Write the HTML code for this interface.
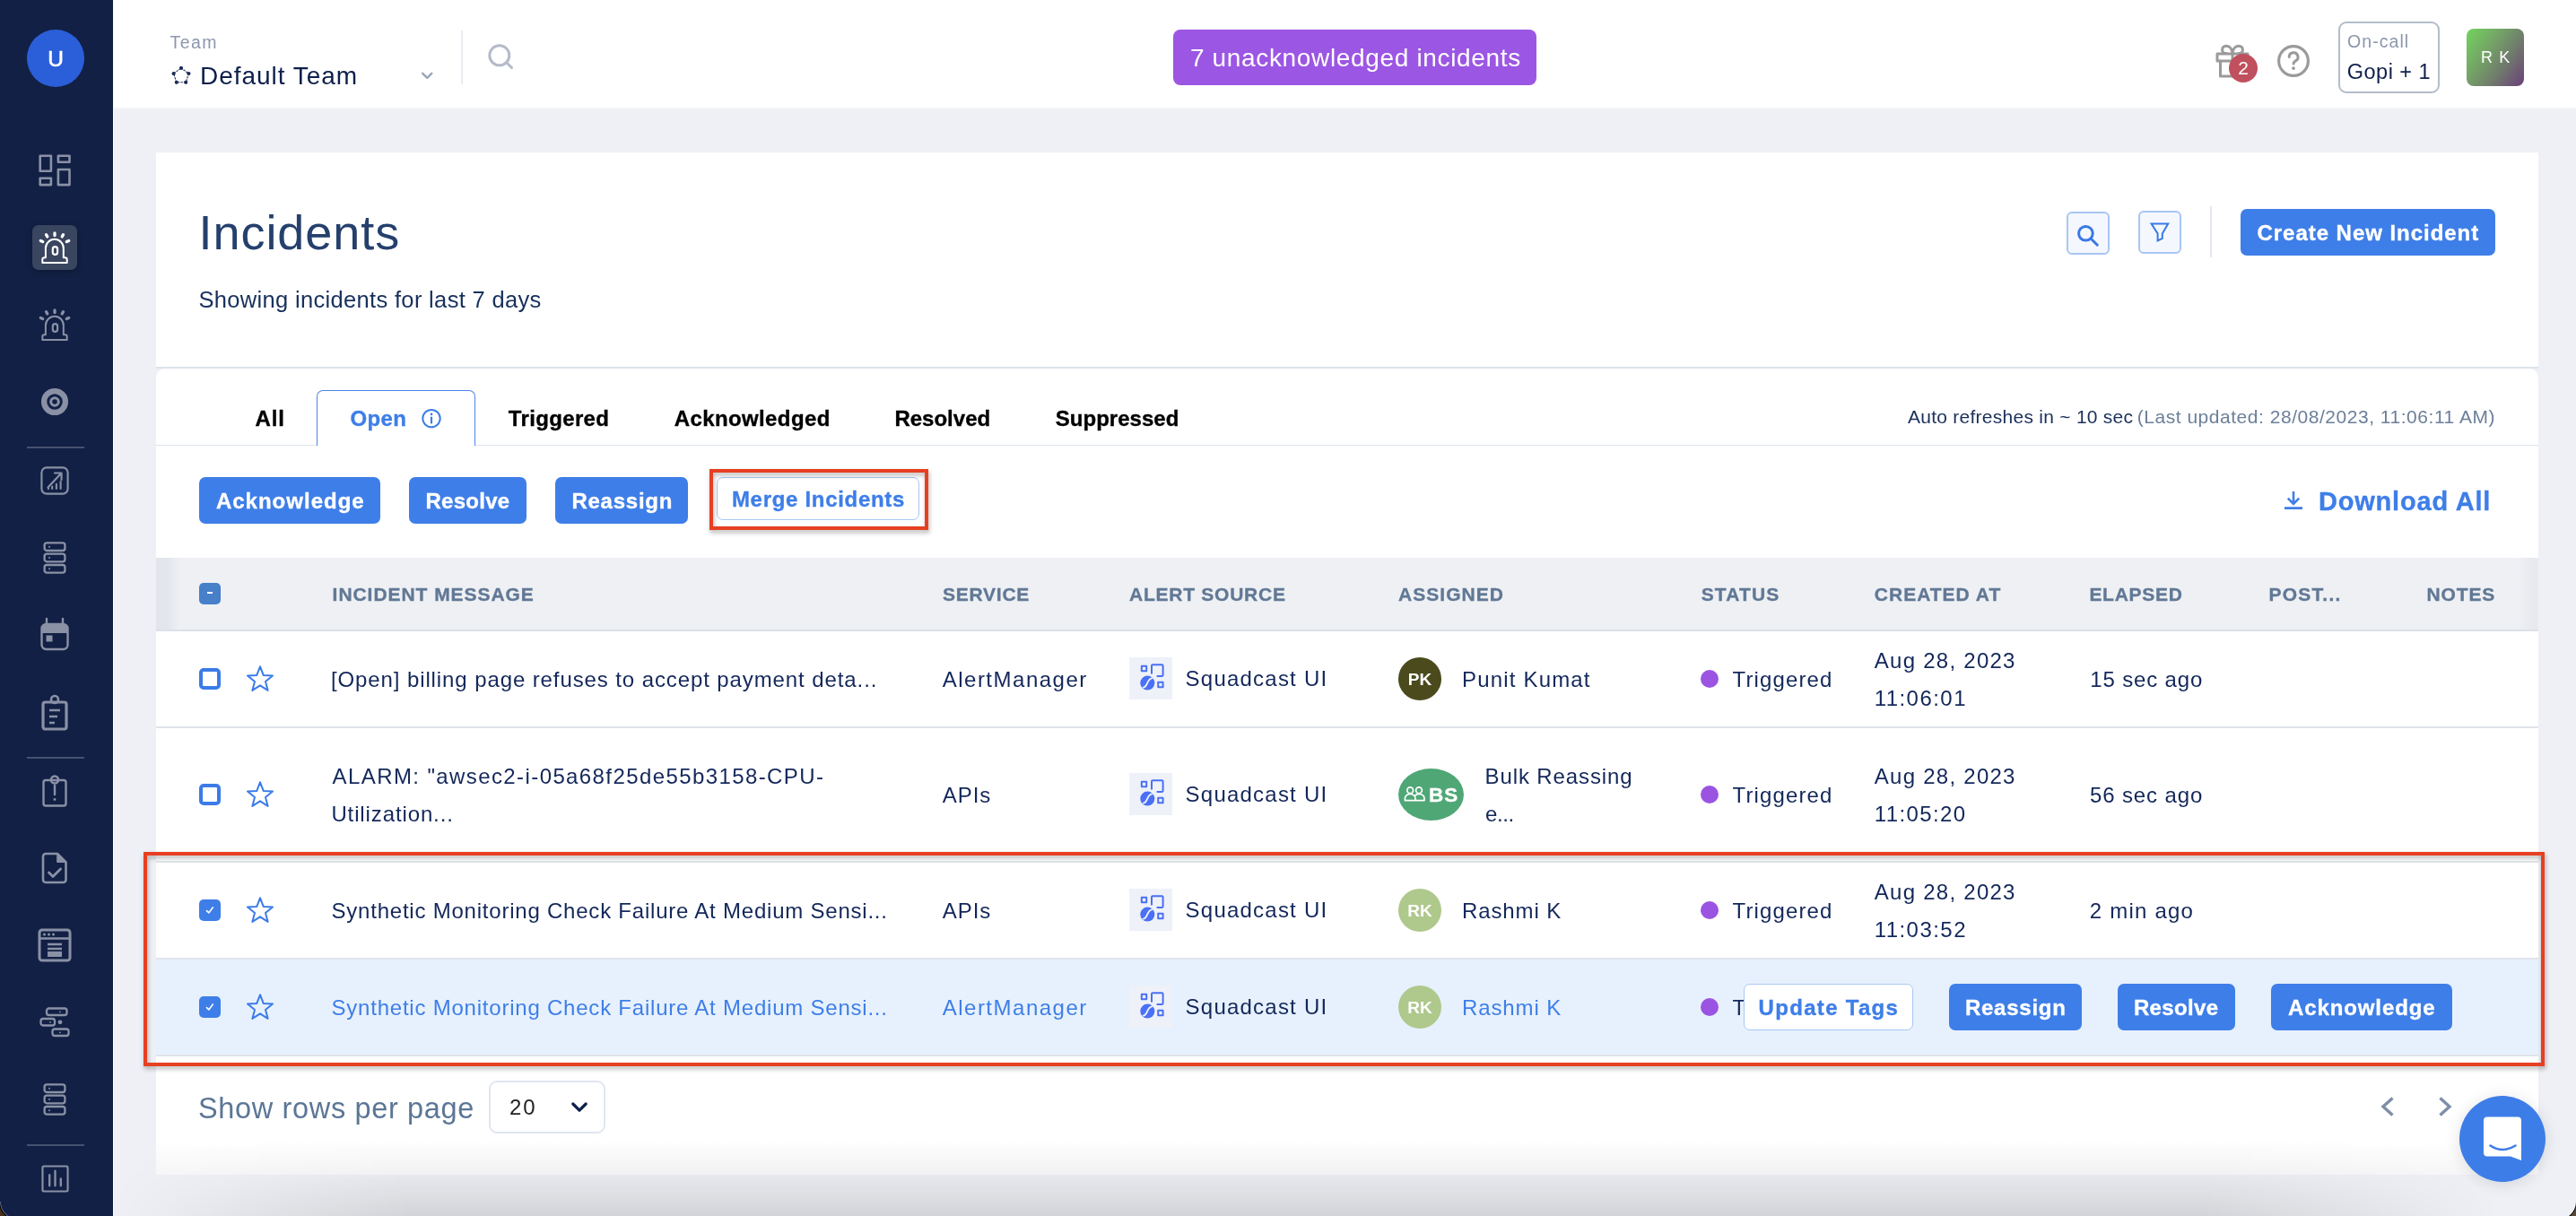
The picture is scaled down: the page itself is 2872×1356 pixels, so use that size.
<!DOCTYPE html>
<html><head><meta charset="utf-8"><title>Incidents</title>
<style>
html,body{margin:0;padding:0;}
body{width:2872px;height:1356px;overflow:hidden;position:relative;background:#eef0f5;font-family:"Liberation Sans",sans-serif;}
#w{position:absolute;left:0;top:0;width:2872px;height:1356px;will-change:transform;}
.r{position:absolute;display:block;}
.t{position:absolute;white-space:nowrap;display:block;}
</style></head><body><div id="w">
<div class="r" style="left:126px;top:0px;width:2746px;height:120px;background:#fff;"></div>
<div class="r" style="left:174px;top:170px;width:2656px;height:240px;background:#fff;"></div>
<div class="r" style="left:174px;top:409px;width:2656px;height:2px;background:#dde2ea;"></div>
<div class="r" style="left:174px;top:411px;width:2656px;height:899px;background:#fff;border-radius:10px 10px 0 0;background:linear-gradient(#fff 0,#fff 860px,#f7f7f8 899px);"></div>
<div class="r" style="left:126px;top:1272px;width:2746px;height:84px;background:linear-gradient(rgba(0,0,0,0) 0,rgba(0,0,0,0.022) 37px,rgba(0,0,0,0.034) 40px,rgba(0,0,0,0.115) 84px);-webkit-mask-image:linear-gradient(90deg,transparent 0,#000 330px,#000 2330px,transparent 2660px);mask-image:linear-gradient(90deg,transparent 0,#000 330px,#000 2330px,transparent 2660px);"></div>
<div class="r" style="left:0px;top:0px;width:126px;height:1356px;background:#122045;"></div>
<div class="r" style="left:126px;top:120px;width:1.3px;height:1236px;background:#fff;"></div>
<div class="r" style="left:127px;top:120px;width:2745px;height:2px;background:#f3f4f8;"></div>
<div class="r" style="left:0;top:1340px;width:20px;height:16px;background:radial-gradient(circle at 20px 0,rgba(0,0,0,0) 0,rgba(0,0,0,0) 18.6px,#5b6c98 19.4px,#000 20.4px,#4a3018 21.6px);"></div>
<div class="r" style="left:2852px;top:1340px;width:20px;height:16px;background:radial-gradient(circle at 0 0,rgba(0,0,0,0) 0,rgba(0,0,0,0) 18.6px,#fff 19.4px,#111 20.4px,#5a4a38 21.6px);z-index:5;"></div>
<div class="r" style="left:30px;top:33px;width:64px;height:64px;background:#2b5fd9;border-radius:50%;"></div>
<span class="t" style="left:30px;width:64px;text-align:center;top:52px;font-size:24.5px;line-height:27px;height:27px;color:#fff;-webkit-text-stroke:0.6px;">U</span>
<div class="r" style="left:36px;top:251px;width:50px;height:50px;background:#3a4560;border-radius:7px;box-shadow:0 2px 6px rgba(0,0,0,.25);"></div>
<div class="r" style="left:30px;top:498px;width:64px;height:2px;background:#46516e;"></div>
<div class="r" style="left:30px;top:844px;width:64px;height:2px;background:#46516e;"></div>
<div class="r" style="left:30px;top:1276px;width:64px;height:2px;background:#46516e;"></div>
<svg class="r" style="left:42px;top:172px;" width="38" height="38" viewBox="0 0 38 38" fill="none" stroke="#8a91a5" stroke-width="2.6" stroke-linecap="round" stroke-linejoin="round"><rect x="2.7" y="1.7" width="12.2" height="17" /><rect x="22.9" y="1.7" width="12.6" height="7.1"/><rect x="22.9" y="17" width="12.6" height="17.1"/><rect x="2.7" y="26.8" width="12.2" height="7.3"/></svg>
<svg class="r" style="left:41px;top:256px;" width="40" height="40" viewBox="0 0 40 40" fill="none" stroke="#ffffff" stroke-width="2.0" stroke-linecap="round" stroke-linejoin="round"><path d="M9.9 31.3 V20.8 a9.95 9.95 0 0 1 19.9 0 V31.3 h1.6 a2.3 2.3 0 0 1 2.3 2.3 V36.9 H6.3 V33.6 a2.3 2.3 0 0 1 2.3 -2.3 Z"/><path d="M20 3.9 V6.5 M10.5 5.7 L11.8 7.9 M29.5 5.7 L28.2 7.9 M4.3 12.5 L6.7 13.6 M35.7 12.5 L33.3 13.6" stroke-width="3.3"/><rect x="17.8" y="19.1" width="5.3" height="8.7" rx="2.65" stroke-width="2.2"/></svg>
<svg class="r" style="left:41px;top:342px;" width="40" height="40" viewBox="0 0 40 40" fill="none" stroke="#8a91a5" stroke-width="2.0" stroke-linecap="round" stroke-linejoin="round"><path d="M9.9 31.3 V20.8 a9.95 9.95 0 0 1 19.9 0 V31.3 h1.6 a2.3 2.3 0 0 1 2.3 2.3 V36.9 H6.3 V33.6 a2.3 2.3 0 0 1 2.3 -2.3 Z"/><path d="M20 3.9 V6.5 M10.5 5.7 L11.8 7.9 M29.5 5.7 L28.2 7.9 M4.3 12.5 L6.7 13.6 M35.7 12.5 L33.3 13.6" stroke-width="3.3"/><rect x="17.8" y="19.1" width="5.3" height="8.7" rx="2.65" stroke-width="2.2"/></svg>
<svg class="r" style="left:43px;top:430px;" width="36" height="36" viewBox="0 0 36 36" fill="none" stroke="#8a91a5" stroke-width="2.4" stroke-linecap="round" stroke-linejoin="round"><circle cx="18" cy="18" r="11.9" stroke-width="6.3"/><circle cx="18" cy="18" r="4.3" stroke-width="3"/></svg>
<svg class="r" style="left:45px;top:519.5px;" width="32" height="32" viewBox="0 0 34 34" fill="none" stroke="#8a91a5" stroke-width="2.3" stroke-linecap="round" stroke-linejoin="round"><rect x="1.5" y="1.5" width="31" height="31" rx="6"/><path d="M9 25 L25 8 M17 8 H25 V16" /><path d="M14 26.5 V24 M19 26.5 V21 M24 26.5 V18" stroke-width="2.2"/><path d="M9.5 26.5 h.1" stroke-width="2.4"/></svg>
<svg class="r" style="left:47px;top:603px;" width="28" height="38" viewBox="0 0 28 38" fill="none" stroke="#8a91a5" stroke-width="2.3" stroke-linecap="round" stroke-linejoin="round"><rect x="2.6" y="2.4" width="22.8" height="8.6" rx="2.6"/><circle cx="8" cy="6.699999999999999" r="1" fill="#8a91a5" stroke="none"/><rect x="2.6" y="14.700000000000001" width="22.8" height="8.6" rx="2.6"/><circle cx="8" cy="19.0" r="1" fill="#8a91a5" stroke="none"/><rect x="2.6" y="27.0" width="22.8" height="8.6" rx="2.6"/><circle cx="8" cy="31.3" r="1" fill="#8a91a5" stroke="none"/></svg>
<svg class="r" style="left:45px;top:688px;" width="32" height="38" viewBox="0 0 32 38" fill="none" stroke="#8a91a5" stroke-width="2.4" stroke-linecap="round" stroke-linejoin="round"><path d="M7 2 V8 M25 2 V8" stroke-width="2.4"/><rect x="1.5" y="8" width="29" height="28" rx="5"/><path d="M1.5 13 a5 5 0 0 1 5 -5 h19 a5 5 0 0 1 5 5 v5 h-29 z" fill="#8a91a5" stroke="none"/><rect x="6.5" y="20.5" width="7" height="7" fill="#8a91a5" stroke="none"/></svg>
<svg class="r" style="left:46px;top:773px;" width="30" height="42" viewBox="0 0 30 42" fill="none" stroke="#8a91a5" stroke-width="2.4" stroke-linecap="round" stroke-linejoin="round"><rect x="2" y="10" width="26" height="30" rx="2.5" stroke-width="3.2"/><circle cx="15" cy="7" r="4" stroke-width="2.6"/><path d="M9 19 H21 M9 26 H18 M9 33 H15" stroke-width="2.6" stroke-linecap="butt"/></svg>
<svg class="r" style="left:47px;top:860px;" width="28" height="42" viewBox="0 0 28 42" fill="none" stroke="#8a91a5" stroke-width="2.4" stroke-linecap="round" stroke-linejoin="round"><rect x="1.5" y="10" width="25" height="28.5" rx="2.5" stroke-width="2.4"/><circle cx="14" cy="9.5" r="4" stroke-width="2.6"/><path d="M14 16 V26" stroke-width="2.4"/><circle cx="14" cy="31.5" r="1.4" fill="#8a91a5" stroke="none"/></svg>
<svg class="r" style="left:46px;top:950px;" width="30" height="36" viewBox="0 0 30 36" fill="none" stroke="#8a91a5" stroke-width="2.4" stroke-linecap="round" stroke-linejoin="round"><path d="M5 2 H18 L27.5 11.5 V31 a3 3 0 0 1 -3 3 H5 a3 3 0 0 1 -3 -3 V5 a3 3 0 0 1 3 -3 Z" stroke-width="2.6"/><path d="M18 2 L27.5 11.5 H18 Z" fill="#8a91a5" stroke-width="1"/><path d="M8.5 23 L13 27.5 L21.5 19" stroke-width="2.8"/></svg>
<svg class="r" style="left:42px;top:1035px;" width="38" height="38" viewBox="0 0 38 38" fill="none" stroke="#8a91a5" stroke-width="2.4" stroke-linecap="round" stroke-linejoin="round"><rect x="2" y="2" width="34" height="34" rx="3" stroke-width="3"/><path d="M2 11.5 H36" stroke-width="2.6"/><circle cx="7.5" cy="7" r="1.5" fill="#8a91a5" stroke="none"/><circle cx="12.5" cy="7" r="1.5" fill="#8a91a5" stroke="none"/><circle cx="17.5" cy="7" r="1.5" fill="#8a91a5" stroke="none"/><path d="M11 18 H27 M11 23 H27" stroke-width="2.6" stroke-linecap="butt"/><rect x="11" y="26" width="16" height="6" fill="#8a91a5" stroke="none"/></svg>
<svg class="r" style="left:44px;top:1123px;" width="34" height="34" viewBox="0 0 34 34" fill="none" stroke="#8a91a5" stroke-width="2.3" stroke-linecap="round" stroke-linejoin="round"><rect x="8" y="1.5" width="22.5" height="7.5" rx="2.5"/><rect x="1.5" y="13" width="15.5" height="7.5" rx="2.5"/><rect x="14.5" y="24.5" width="18" height="7.5" rx="2.5"/><circle cx="23" cy="16.8" r="2.4" fill="#8a91a5" stroke="none"/><circle cx="23" cy="5.3" r="0.9" fill="#8a91a5" stroke="none"/><circle cx="12" cy="16.8" r="0.9" fill="#8a91a5" stroke="none"/><circle cx="23" cy="28.3" r="0.9" fill="#8a91a5" stroke="none"/></svg>
<svg class="r" style="left:47px;top:1207px;" width="28" height="38" viewBox="0 0 28 38" fill="none" stroke="#8a91a5" stroke-width="2.3" stroke-linecap="round" stroke-linejoin="round"><rect x="2.6" y="2.4" width="22.8" height="8.6" rx="2.6"/><circle cx="8" cy="6.699999999999999" r="1" fill="#8a91a5" stroke="none"/><rect x="2.6" y="14.700000000000001" width="22.8" height="8.6" rx="2.6"/><circle cx="8" cy="19.0" r="1" fill="#8a91a5" stroke="none"/><rect x="2.6" y="27.0" width="22.8" height="8.6" rx="2.6"/><circle cx="8" cy="31.3" r="1" fill="#8a91a5" stroke="none"/></svg>
<svg class="r" style="left:45.5px;top:1298.7px;" width="31" height="31" viewBox="0 0 32 32" fill="none" stroke="#8a91a5" stroke-width="2.2" stroke-linecap="round" stroke-linejoin="round"><rect x="1.5" y="1.5" width="29" height="29" rx="1.5"/><path d="M9.5 11.5 V24 M16 7 V24 M22.5 16 V24" stroke-width="2.4"/></svg>
<span class="t" style="left:189.6px;top:36px;font-size:19.5px;line-height:22px;height:22px;color:#8c97ad;letter-spacing:1.43px;">Team</span>
<svg class="r" style="left:191px;top:73px;" width="22" height="23" viewBox="0 0 22 23" fill="none" stroke="#1d2b55" stroke-width="2.4" stroke-linecap="round" stroke-linejoin="round"><polygon points="11.0,2.9 19.4,9.0 16.2,18.8 5.8,18.8 2.6,9.0" stroke-width="1.1" stroke-dasharray="1.6 1.9"/><circle cx="11.0" cy="2.9" r="2.1" fill="#1d2b55" stroke="none"/><circle cx="19.4" cy="9.0" r="2.1" fill="#1d2b55" stroke="none"/><circle cx="16.2" cy="18.8" r="2.1" fill="#1d2b55" stroke="none"/><circle cx="5.8" cy="18.8" r="2.1" fill="#1d2b55" stroke="none"/><circle cx="2.6" cy="9.0" r="2.1" fill="#1d2b55" stroke="none"/></svg>
<span class="t" style="left:223.0px;top:69px;font-size:28px;line-height:31px;height:31px;color:#0d1f4a;letter-spacing:0.96px;">Default Team</span>
<svg class="r" style="left:468px;top:78px;" width="17" height="13" viewBox="0 0 17 13" fill="none" stroke="#9aa5b8" stroke-width="2.4" stroke-linecap="round" stroke-linejoin="round"><path d="M3.2 3.8 L8.25 8.8 L13.3 3.8"/></svg>
<div class="r" style="left:514px;top:34px;width:2px;height:60px;background:#e9ecf1;"></div>
<svg class="r" style="left:541px;top:46px;" width="34" height="34" viewBox="0 0 34 34" fill="none" stroke="#b4bbc9" stroke-width="3" stroke-linecap="round" stroke-linejoin="round"><circle cx="15.8" cy="15.8" r="11"/><path d="M24 24 L29.5 29.5"/></svg>
<div class="r" style="left:1308px;top:33px;width:405px;height:62px;background:#9c56e4;border-radius:8px;"></div>
<span class="t" style="left:1326.9px;top:49px;font-size:28px;line-height:31px;height:31px;color:#fff;letter-spacing:0.66px;">7 unacknowledged incidents</span>
<svg class="r" style="left:2468px;top:47px;" width="42" height="42" viewBox="0 0 42 42" fill="none" stroke="#9a9a9a" stroke-width="3" stroke-linecap="round" stroke-linejoin="round"><rect x="4" y="13" width="34" height="8"/><path d="M7.5 21 V38 H34.5 V21"/><path d="M21 13 V38" /><path d="M21 12.6 C20.5 8 18 4.2 14.2 4.2 C11.4 4.2 9.6 6.1 9.6 8.4 C9.6 10.8 11.4 12.6 14 12.6 M21 12.6 C21.5 8 24 4.2 27.8 4.2 C30.6 4.2 32.4 6.1 32.4 8.4 C32.4 10.8 30.6 12.6 28 12.6"/></svg>
<div class="r" style="left:2485px;top:60px;width:32px;height:32px;background:#c0505e;border-radius:50%;"></div>
<span class="t" style="left:2485px;width:32px;text-align:center;top:64px;font-size:21px;line-height:23px;height:23px;color:#fff;">2</span>
<svg class="r" style="left:2537px;top:48px;" width="40" height="40" viewBox="0 0 40 40" fill="none" stroke="#9a9a9a" stroke-width="2.4" stroke-linecap="round" stroke-linejoin="round"><circle cx="20" cy="20" r="16.4" stroke-width="3.2"/><path d="M15.2 15.6 a4.9 4.9 0 1 1 7.2 4.3 c-1.7 .9 -2.3 1.7 -2.3 3.2" stroke-width="3"/><circle cx="20" cy="28.1" r="1.9" fill="#9a9a9a" stroke="none"/></svg>
<div class="r" style="left:2607px;top:24px;width:113px;height:80px;background:#fff;border:2px solid #b4bccb;border-radius:9px;box-sizing:border-box;"></div>
<span class="t" style="left:2617.1px;top:35px;font-size:19.5px;line-height:22px;height:22px;color:#8c97ad;letter-spacing:1.05px;">On-call</span>
<span class="t" style="left:2616.8px;top:67px;font-size:23.5px;line-height:26px;height:26px;color:#0d1f4a;letter-spacing:0.47px;">Gopi + 1</span>
<div class="r" style="left:2750px;top:32px;width:64px;height:64px;background:#777;border-radius:8px;background:linear-gradient(125deg,#73d45e 0%,#74a666 35%,#707a6c 65%,#6b3f7c 100%);"></div>
<span class="t" style="left:2766.1px;top:54px;font-size:18px;line-height:20px;height:20px;color:#fff;letter-spacing:1.03px;">R K</span>
<span class="t" style="left:221.6px;top:229px;font-size:54px;line-height:60px;height:60px;color:#25406d;letter-spacing:0.93px;">Incidents</span>
<span class="t" style="left:221.4px;top:320px;font-size:25.5px;line-height:28px;height:28px;color:#17305c;letter-spacing:0.33px;">Showing incidents for last 7 days</span>
<div class="r" style="left:2304px;top:236px;width:48px;height:48px;background:#f4f8fe;border:2px solid #a8c6f5;border-radius:6px;box-sizing:border-box;"></div>
<svg class="r" style="left:2312px;top:246px;" width="32" height="32" viewBox="0 0 32 32" fill="none" stroke="#3a78e6" stroke-width="3" stroke-linecap="round" stroke-linejoin="round"><circle cx="13.4" cy="14.3" r="7.8"/><path d="M19.3 20.2 L26.3 27.2"/></svg>
<div class="r" style="left:2384px;top:235px;width:48px;height:48px;background:#f4f8fe;border:2px solid #a8c6f5;border-radius:6px;box-sizing:border-box;"></div>
<svg class="r" style="left:2394px;top:245px;" width="28" height="28" viewBox="0 0 28 28" fill="none" stroke="#3a78e6" stroke-width="2" stroke-linecap="round" stroke-linejoin="round"><path d="M4.6 4.6 H23.2 L16.8 15.4 V20.8 L11.6 23.4 V15.4 Z" stroke-linejoin="miter"/></svg>
<div class="r" style="left:2464px;top:230px;width:2px;height:57px;background:#e4e8f0;"></div>
<div class="r" style="left:2498px;top:233px;width:284px;height:52px;background:#3e7ee8;border-radius:7px;"></div>
<span class="t" style="left:2516.5px;top:246px;font-size:24px;line-height:27px;height:27px;color:#fff;letter-spacing:0.96px;font-weight:bold;-webkit-text-stroke:0.35px;">Create New Incident</span>
<div class="r" style="left:174px;top:495.6px;width:2656px;height:1.5px;background:#dde3ee;"></div>
<div class="r" style="left:353px;top:435px;width:177px;height:62px;box-sizing:border-box;border:1.5px solid #4a86ea;border-bottom:none;border-radius:7px 7px 0 0;background:#fff;"></div>
<span class="t" style="left:284.6px;top:453px;font-size:24px;line-height:27px;height:27px;color:#000;letter-spacing:0.78px;font-weight:bold;-webkit-text-stroke:0.35px;">All</span>
<span class="t" style="left:390.5px;top:453px;font-size:24px;line-height:27px;height:27px;color:#3e7ee8;letter-spacing:0.36px;font-weight:bold;-webkit-text-stroke:0.35px;">Open</span>
<svg class="r" style="left:469px;top:455px;" width="24" height="24" viewBox="0 0 24 24" fill="none" stroke="#3e7ee8" stroke-width="2.4" stroke-linecap="round" stroke-linejoin="round"><circle cx="12" cy="11.6" r="9.7" stroke-width="2"/><path d="M12 10.6 V16.6" stroke-width="2.2"/><circle cx="12" cy="6.9" r="1.3" fill="#3e7ee8" stroke="none"/></svg>
<span class="t" style="left:566.8px;top:453px;font-size:24px;line-height:27px;height:27px;color:#000;letter-spacing:0.35px;font-weight:bold;-webkit-text-stroke:0.35px;">Triggered</span>
<span class="t" style="left:751.7px;top:453px;font-size:24px;line-height:27px;height:27px;color:#000;letter-spacing:0.39px;font-weight:bold;-webkit-text-stroke:0.35px;">Acknowledged</span>
<span class="t" style="left:997.4px;top:453px;font-size:24px;line-height:27px;height:27px;color:#000;letter-spacing:0.01px;font-weight:bold;-webkit-text-stroke:0.35px;">Resolved</span>
<span class="t" style="left:1176.8px;top:453px;font-size:24px;line-height:27px;height:27px;color:#000;letter-spacing:0.02px;font-weight:bold;-webkit-text-stroke:0.35px;">Suppressed</span>
<span class="t" style="left:2127.0px;top:453px;font-size:21px;line-height:23px;height:23px;color:#1a2f5a;letter-spacing:0.26px;">Auto refreshes in ~ 10 sec</span>
<span class="t" style="left:2382.7px;top:453px;font-size:21px;line-height:23px;height:23px;color:#6b7f99;letter-spacing:0.53px;">(Last updated: 28/08/2023, 11:06:11 AM)</span>
<div class="r" style="left:222px;top:532px;width:202px;height:52px;background:#3e7ee8;border-radius:7px;"></div>
<span class="t" style="left:240.9px;top:545px;font-size:24px;line-height:27px;height:27px;color:#fff;letter-spacing:1.01px;font-weight:bold;-webkit-text-stroke:0.35px;">Acknowledge</span>
<div class="r" style="left:456px;top:532px;width:131px;height:52px;background:#3e7ee8;border-radius:7px;"></div>
<span class="t" style="left:474.4px;top:545px;font-size:24px;line-height:27px;height:27px;color:#fff;letter-spacing:0.29px;font-weight:bold;-webkit-text-stroke:0.35px;">Resolve</span>
<div class="r" style="left:619px;top:532px;width:148px;height:52px;background:#3e7ee8;border-radius:7px;"></div>
<span class="t" style="left:637.4px;top:545px;font-size:24px;line-height:27px;height:27px;color:#fff;letter-spacing:0.76px;font-weight:bold;-webkit-text-stroke:0.35px;">Reassign</span>
<div class="r" style="left:799px;top:532px;width:226px;height:48px;background:#fff;border:1.5px solid #a9c6f4;border-radius:7px;box-sizing:border-box;"></div>
<span class="t" style="left:815.9px;top:543px;font-size:24px;line-height:27px;height:27px;color:#3e7ee8;letter-spacing:0.70px;font-weight:bold;-webkit-text-stroke:0.35px;">Merge Incidents</span>
<div class="r" style="left:791px;top:523px;width:244px;height:68px;box-sizing:border-box;border:4px solid #e73f22;filter:drop-shadow(1px 3px 2.5px rgba(0,0,0,.30));"></div>
<svg class="r" style="left:2544px;top:545px;" width="26" height="26" viewBox="0 0 26 26" fill="none" stroke="#3e7ee8" stroke-width="2.6" stroke-linecap="round" stroke-linejoin="round"><path d="M13 3 V16.5 M6.8 10.6 L13 16.8 L19.2 10.6 M3 21.6 H23" stroke-linecap="butt" stroke-linejoin="miter"/></svg>
<span class="t" style="left:2584.9px;top:543px;font-size:29px;line-height:32px;height:32px;color:#3e7ee8;letter-spacing:0.81px;font-weight:bold;-webkit-text-stroke:0.35px;">Download All</span>
<div class="r" style="left:174px;top:622px;width:2656px;height:80px;background:#eef0f4;background:linear-gradient(90deg,#e2e5eb 0,#e2e5eb 11px,rgba(238,240,244,0) 27px),linear-gradient(270deg,#e7e9ee 0,#e7e9ee 6px,rgba(238,240,244,0) 22px),#eef0f4;"></div>
<div class="r" style="left:174px;top:702px;width:2656px;height:2px;background:#dde1e8;"></div>
<div class="r" style="left:174px;top:1069px;width:2656px;height:108px;background:#e7f1fd;"></div>
<div class="r" style="left:174px;top:809.5px;width:2656px;height:2px;background:#e0e4ea;"></div>
<div class="r" style="left:174px;top:959.5px;width:2656px;height:2px;background:#e0e4ea;"></div>
<div class="r" style="left:174px;top:1067.5px;width:2656px;height:2px;background:#e0e4ea;"></div>
<div class="r" style="left:174px;top:1175.5px;width:2656px;height:2px;background:#e0e4ea;"></div>
<span class="t" style="left:370.6px;top:651px;font-size:21px;line-height:23px;height:23px;color:#617895;letter-spacing:0.95px;font-weight:bold;-webkit-text-stroke:0.35px;">INCIDENT MESSAGE</span>
<span class="t" style="left:1051.0px;top:651px;font-size:21px;line-height:23px;height:23px;color:#617895;letter-spacing:0.76px;font-weight:bold;-webkit-text-stroke:0.35px;">SERVICE</span>
<span class="t" style="left:1259.1px;top:651px;font-size:21px;line-height:23px;height:23px;color:#617895;letter-spacing:0.74px;font-weight:bold;-webkit-text-stroke:0.35px;">ALERT SOURCE</span>
<span class="t" style="left:1559.0px;top:651px;font-size:21px;line-height:23px;height:23px;color:#617895;letter-spacing:1.03px;font-weight:bold;-webkit-text-stroke:0.35px;">ASSIGNED</span>
<span class="t" style="left:1896.7px;top:651px;font-size:21px;line-height:23px;height:23px;color:#617895;letter-spacing:1.16px;font-weight:bold;-webkit-text-stroke:0.35px;">STATUS</span>
<span class="t" style="left:2089.8px;top:651px;font-size:21px;line-height:23px;height:23px;color:#617895;letter-spacing:1.00px;font-weight:bold;-webkit-text-stroke:0.35px;">CREATED AT</span>
<span class="t" style="left:2329.4px;top:651px;font-size:21px;line-height:23px;height:23px;color:#617895;letter-spacing:0.71px;font-weight:bold;-webkit-text-stroke:0.35px;">ELAPSED</span>
<span class="t" style="left:2529.4px;top:651px;font-size:21px;line-height:23px;height:23px;color:#617895;letter-spacing:1.28px;font-weight:bold;-webkit-text-stroke:0.35px;">POST...</span>
<span class="t" style="left:2705.4px;top:651px;font-size:21px;line-height:23px;height:23px;color:#617895;letter-spacing:0.89px;font-weight:bold;-webkit-text-stroke:0.35px;">NOTES</span>
<div class="r" style="left:222px;top:650px;width:24px;height:24px;background:#477fc9;border-radius:5px;"></div>
<div class="r" style="left:231px;top:660.3px;width:6.2px;height:1.9px;background:#fff;"></div>
<div class="r" style="left:222px;top:745px;width:24px;height:24px;background:#fff;border:4px solid #3b7be8;border-radius:5px;box-sizing:border-box;"></div>
<svg class="r" style="left:274px;top:741.1px;" width="32" height="34" viewBox="0 0 32 34" fill="none" stroke="#3b7be8" stroke-width="2" stroke-linecap="round" stroke-linejoin="round"><polygon points="16.00,2.30 19.70,11.90 29.98,12.46 21.99,18.95 24.64,28.89 16.00,23.30 7.36,28.89 10.01,18.95 2.02,12.46 12.30,11.90"/></svg>
<span class="t" style="left:368.9px;top:744px;font-size:24px;line-height:27px;height:27px;color:#13275a;letter-spacing:0.90px;">[Open] billing page refuses to accept payment deta...</span>
<span class="t" style="left:1050.7px;top:744px;font-size:24px;line-height:27px;height:27px;color:#13275a;letter-spacing:1.50px;">AlertManager</span>
<div class="r" style="left:1259px;top:733px;width:48px;height:47px;background:#eef1f8;"></div>
<svg class="r" style="left:1259px;top:733px;" width="48" height="47" viewBox="0 0 48 47" fill="none" stroke="#4a70f5" stroke-width="2" stroke-linecap="round" stroke-linejoin="round"><rect x="13.8" y="9.8" width="5.4" height="5.4" stroke-width="2"/><path d="M25 18.4 V9.4 a1.2 1.2 0 0 1 1.2 -1.2 H36.4 a1.2 1.2 0 0 1 1.2 1.2 V19.8 a1.2 1.2 0 0 1 -1.2 1.2 H30.6" stroke-width="2" stroke-linecap="butt"/><rect x="32.2" y="27.8" width="5.4" height="5.4" stroke-width="2"/><circle cx="20.3" cy="28.6" r="8" fill="#4a70f5" stroke="none"/><path d="M15.6 33.6 C20.6 33.2 19.6 24.2 25.2 23.4" stroke="#eef1f8" stroke-width="1.9"/></svg>
<span class="t" style="left:1321.6px;top:743px;font-size:24px;line-height:27px;height:27px;color:#13275a;letter-spacing:1.22px;">Squadcast UI</span>
<div class="r" style="left:1559px;top:733px;width:48px;height:48px;background:#4a4a1d;border-radius:50%;"></div>
<span class="t" style="left:1559px;width:48px;text-align:center;top:747px;font-size:19px;line-height:21px;height:21px;color:#fff;font-weight:bold;">PK</span>
<span class="t" style="left:1630.1px;top:744px;font-size:24px;line-height:27px;height:27px;color:#13275a;letter-spacing:1.17px;">Punit Kumat</span>
<div class="r" style="left:1895.8px;top:747px;width:20px;height:20px;background:#9b54e2;border-radius:50%;"></div>
<span class="t" style="left:1931.5px;top:744px;font-size:24px;line-height:27px;height:27px;color:#13275a;letter-spacing:1.14px;">Triggered</span>
<span class="t" style="left:2089.8px;top:723px;font-size:24px;line-height:27px;height:27px;color:#13275a;letter-spacing:1.26px;">Aug 28, 2023</span>
<span class="t" style="left:2089.7px;top:765px;font-size:24px;line-height:27px;height:27px;color:#13275a;letter-spacing:1.45px;">11:06:01</span>
<span class="t" style="left:2330.2px;top:744px;font-size:24px;line-height:27px;height:27px;color:#13275a;letter-spacing:0.86px;">15 sec ago</span>
<div class="r" style="left:222px;top:874px;width:24px;height:24px;background:#fff;border:4px solid #3b7be8;border-radius:5px;box-sizing:border-box;"></div>
<svg class="r" style="left:274px;top:870.1px;" width="32" height="34" viewBox="0 0 32 34" fill="none" stroke="#3b7be8" stroke-width="2" stroke-linecap="round" stroke-linejoin="round"><polygon points="16.00,2.30 19.70,11.90 29.98,12.46 21.99,18.95 24.64,28.89 16.00,23.30 7.36,28.89 10.01,18.95 2.02,12.46 12.30,11.90"/></svg>
<span class="t" style="left:370.6px;top:852px;font-size:24px;line-height:27px;height:27px;color:#13275a;letter-spacing:1.40px;">ALARM: &quot;awsec2-i-05a68f25de55b3158-CPU-</span>
<span class="t" style="left:369.4px;top:894px;font-size:24px;line-height:27px;height:27px;color:#13275a;letter-spacing:0.88px;">Utilization...</span>
<span class="t" style="left:1050.7px;top:873px;font-size:24px;line-height:27px;height:27px;color:#13275a;letter-spacing:1.00px;">APIs</span>
<div class="r" style="left:1259px;top:862px;width:48px;height:47px;background:#eef1f8;"></div>
<svg class="r" style="left:1259px;top:862px;" width="48" height="47" viewBox="0 0 48 47" fill="none" stroke="#4a70f5" stroke-width="2" stroke-linecap="round" stroke-linejoin="round"><rect x="13.8" y="9.8" width="5.4" height="5.4" stroke-width="2"/><path d="M25 18.4 V9.4 a1.2 1.2 0 0 1 1.2 -1.2 H36.4 a1.2 1.2 0 0 1 1.2 1.2 V19.8 a1.2 1.2 0 0 1 -1.2 1.2 H30.6" stroke-width="2" stroke-linecap="butt"/><rect x="32.2" y="27.8" width="5.4" height="5.4" stroke-width="2"/><circle cx="20.3" cy="28.6" r="8" fill="#4a70f5" stroke="none"/><path d="M15.6 33.6 C20.6 33.2 19.6 24.2 25.2 23.4" stroke="#eef1f8" stroke-width="1.9"/></svg>
<span class="t" style="left:1321.6px;top:872px;font-size:24px;line-height:27px;height:27px;color:#13275a;letter-spacing:1.22px;">Squadcast UI</span>
<div class="r" style="left:1895.8px;top:876px;width:20px;height:20px;background:#9b54e2;border-radius:50%;"></div>
<span class="t" style="left:1931.5px;top:873px;font-size:24px;line-height:27px;height:27px;color:#13275a;letter-spacing:1.14px;">Triggered</span>
<span class="t" style="left:2089.8px;top:852px;font-size:24px;line-height:27px;height:27px;color:#13275a;letter-spacing:1.26px;">Aug 28, 2023</span>
<span class="t" style="left:2089.7px;top:894px;font-size:24px;line-height:27px;height:27px;color:#13275a;letter-spacing:1.41px;">11:05:20</span>
<span class="t" style="left:2330.0px;top:873px;font-size:24px;line-height:27px;height:27px;color:#13275a;letter-spacing:0.87px;">56 sec ago</span>
<div class="r" style="left:1559px;top:857px;width:73px;height:58px;background:#4fa776;border-radius:50%;"></div>
<svg class="r" style="left:1564px;top:875px;" width="26" height="20" viewBox="0 0 26 20" fill="none" stroke="#fff" stroke-width="1.7" stroke-linecap="round" stroke-linejoin="round"><circle cx="8.2" cy="6.2" r="3.4"/><circle cx="18" cy="6.2" r="3.4"/><path d="M2.4 17.6 V15.4 a5.8 5 0 0 1 11.6 0 V17.6 Z M14 17.6 H24 V15.4 a5.8 5 0 0 0 -10.4 -3"/></svg>
<span class="t" style="left:1593.1px;top:874px;font-size:22.5px;line-height:25px;height:25px;color:#fff;letter-spacing:0.99px;font-weight:bold;-webkit-text-stroke:0.35px;">BS</span>
<span class="t" style="left:1655.6px;top:852px;font-size:24px;line-height:27px;height:27px;color:#13275a;letter-spacing:0.88px;">Bulk Reassing</span>
<span class="t" style="left:1656.0px;top:894px;font-size:24px;line-height:27px;height:27px;color:#13275a;letter-spacing:-0.41px;">e...</span>
<div class="r" style="left:222px;top:1003px;width:24px;height:24px;background:#3e7ee8;border-radius:5px;"></div>
<svg class="r" style="left:228px;top:1009px;" width="12" height="12" viewBox="0 0 12 12" fill="none" stroke="#fff" stroke-width="1.6" stroke-linecap="round" stroke-linejoin="round"><path d="M2.5 6.6 L4.8 8.9 L9.3 3"/></svg>
<svg class="r" style="left:274px;top:999.1px;" width="32" height="34" viewBox="0 0 32 34" fill="none" stroke="#3b7be8" stroke-width="2" stroke-linecap="round" stroke-linejoin="round"><polygon points="16.00,2.30 19.70,11.90 29.98,12.46 21.99,18.95 24.64,28.89 16.00,23.30 7.36,28.89 10.01,18.95 2.02,12.46 12.30,11.90"/></svg>
<span class="t" style="left:369.5px;top:1002px;font-size:24px;line-height:27px;height:27px;color:#13275a;letter-spacing:0.78px;">Synthetic Monitoring Check Failure At Medium Sensi...</span>
<span class="t" style="left:1050.7px;top:1002px;font-size:24px;line-height:27px;height:27px;color:#13275a;letter-spacing:1.00px;">APIs</span>
<div class="r" style="left:1259px;top:991px;width:48px;height:47px;background:#eef1f8;"></div>
<svg class="r" style="left:1259px;top:991px;" width="48" height="47" viewBox="0 0 48 47" fill="none" stroke="#4a70f5" stroke-width="2" stroke-linecap="round" stroke-linejoin="round"><rect x="13.8" y="9.8" width="5.4" height="5.4" stroke-width="2"/><path d="M25 18.4 V9.4 a1.2 1.2 0 0 1 1.2 -1.2 H36.4 a1.2 1.2 0 0 1 1.2 1.2 V19.8 a1.2 1.2 0 0 1 -1.2 1.2 H30.6" stroke-width="2" stroke-linecap="butt"/><rect x="32.2" y="27.8" width="5.4" height="5.4" stroke-width="2"/><circle cx="20.3" cy="28.6" r="8" fill="#4a70f5" stroke="none"/><path d="M15.6 33.6 C20.6 33.2 19.6 24.2 25.2 23.4" stroke="#eef1f8" stroke-width="1.9"/></svg>
<span class="t" style="left:1321.6px;top:1001px;font-size:24px;line-height:27px;height:27px;color:#13275a;letter-spacing:1.22px;">Squadcast UI</span>
<div class="r" style="left:1559px;top:991px;width:48px;height:48px;background:#afc88c;border-radius:50%;"></div>
<span class="t" style="left:1559px;width:48px;text-align:center;top:1005px;font-size:19px;line-height:21px;height:21px;color:#fff;font-weight:bold;">RK</span>
<span class="t" style="left:1630.1px;top:1002px;font-size:24px;line-height:27px;height:27px;color:#13275a;letter-spacing:0.86px;">Rashmi K</span>
<div class="r" style="left:1895.8px;top:1005px;width:20px;height:20px;background:#9b54e2;border-radius:50%;"></div>
<span class="t" style="left:1931.5px;top:1002px;font-size:24px;line-height:27px;height:27px;color:#13275a;letter-spacing:1.14px;">Triggered</span>
<span class="t" style="left:2089.8px;top:981px;font-size:24px;line-height:27px;height:27px;color:#13275a;letter-spacing:1.26px;">Aug 28, 2023</span>
<span class="t" style="left:2089.7px;top:1023px;font-size:24px;line-height:27px;height:27px;color:#13275a;letter-spacing:1.45px;">11:03:52</span>
<span class="t" style="left:2329.8px;top:1002px;font-size:24px;line-height:27px;height:27px;color:#13275a;letter-spacing:1.22px;">2 min ago</span>
<div class="r" style="left:222px;top:1111px;width:24px;height:24px;background:#3e7ee8;border-radius:5px;"></div>
<svg class="r" style="left:228px;top:1117px;" width="12" height="12" viewBox="0 0 12 12" fill="none" stroke="#fff" stroke-width="1.6" stroke-linecap="round" stroke-linejoin="round"><path d="M2.5 6.6 L4.8 8.9 L9.3 3"/></svg>
<svg class="r" style="left:274px;top:1107.1px;" width="32" height="34" viewBox="0 0 32 34" fill="none" stroke="#3b7be8" stroke-width="2" stroke-linecap="round" stroke-linejoin="round"><polygon points="16.00,2.30 19.70,11.90 29.98,12.46 21.99,18.95 24.64,28.89 16.00,23.30 7.36,28.89 10.01,18.95 2.02,12.46 12.30,11.90"/></svg>
<span class="t" style="left:369.5px;top:1110px;font-size:24px;line-height:27px;height:27px;color:#3e7ee8;letter-spacing:0.78px;">Synthetic Monitoring Check Failure At Medium Sensi...</span>
<span class="t" style="left:1050.7px;top:1110px;font-size:24px;line-height:27px;height:27px;color:#3e7ee8;letter-spacing:1.50px;">AlertManager</span>
<div class="r" style="left:1259px;top:1099px;width:48px;height:47px;background:#eef1f8;"></div>
<svg class="r" style="left:1259px;top:1099px;" width="48" height="47" viewBox="0 0 48 47" fill="none" stroke="#4a70f5" stroke-width="2" stroke-linecap="round" stroke-linejoin="round"><rect x="13.8" y="9.8" width="5.4" height="5.4" stroke-width="2"/><path d="M25 18.4 V9.4 a1.2 1.2 0 0 1 1.2 -1.2 H36.4 a1.2 1.2 0 0 1 1.2 1.2 V19.8 a1.2 1.2 0 0 1 -1.2 1.2 H30.6" stroke-width="2" stroke-linecap="butt"/><rect x="32.2" y="27.8" width="5.4" height="5.4" stroke-width="2"/><circle cx="20.3" cy="28.6" r="8" fill="#4a70f5" stroke="none"/><path d="M15.6 33.6 C20.6 33.2 19.6 24.2 25.2 23.4" stroke="#eef1f8" stroke-width="1.9"/></svg>
<span class="t" style="left:1321.6px;top:1109px;font-size:24px;line-height:27px;height:27px;color:#13275a;letter-spacing:1.22px;">Squadcast UI</span>
<div class="r" style="left:1559px;top:1099px;width:48px;height:48px;background:#afc88c;border-radius:50%;"></div>
<span class="t" style="left:1559px;width:48px;text-align:center;top:1113px;font-size:19px;line-height:21px;height:21px;color:#fff;font-weight:bold;">RK</span>
<span class="t" style="left:1630.1px;top:1110px;font-size:24px;line-height:27px;height:27px;color:#3e7ee8;letter-spacing:0.86px;">Rashmi K</span>
<div class="r" style="left:1895.8px;top:1113px;width:20px;height:20px;background:#9b54e2;border-radius:50%;"></div>
<span class="t" style="left:1931.5px;top:1110px;font-size:24px;line-height:27px;height:27px;color:#13275a;letter-spacing:1.14px;">Triggered</span>
<div class="r" style="left:1943.5px;top:1071px;width:887px;height:104px;background:#e7f1fd;"></div>
<div class="r" style="left:1943.7px;top:1097px;width:189px;height:52px;background:#fff;border:1.5px solid #a9c6f4;border-radius:7px;box-sizing:border-box;"></div>
<span class="t" style="left:1960.6px;top:1110px;font-size:24px;line-height:27px;height:27px;color:#3e7ee8;letter-spacing:1.31px;font-weight:bold;-webkit-text-stroke:0.35px;">Update Tags</span>
<div class="r" style="left:2173px;top:1097px;width:148px;height:52px;background:#3e7ee8;border-radius:7px;"></div>
<span class="t" style="left:2190.9px;top:1110px;font-size:24px;line-height:27px;height:27px;color:#fff;letter-spacing:0.76px;font-weight:bold;-webkit-text-stroke:0.35px;">Reassign</span>
<div class="r" style="left:2361px;top:1097px;width:131px;height:52px;background:#3e7ee8;border-radius:7px;"></div>
<span class="t" style="left:2378.9px;top:1110px;font-size:24px;line-height:27px;height:27px;color:#fff;letter-spacing:0.37px;font-weight:bold;-webkit-text-stroke:0.35px;">Resolve</span>
<div class="r" style="left:2532px;top:1097px;width:202px;height:52px;background:#3e7ee8;border-radius:7px;"></div>
<span class="t" style="left:2550.9px;top:1110px;font-size:24px;line-height:27px;height:27px;color:#fff;letter-spacing:0.91px;font-weight:bold;-webkit-text-stroke:0.35px;">Acknowledge</span>
<div class="r" style="left:160px;top:950px;width:2677px;height:239px;box-sizing:border-box;border:4px solid #e73f22;filter:drop-shadow(1px 3px 2.5px rgba(0,0,0,.30));"></div>
<span class="t" style="left:221.0px;top:1218px;font-size:32.5px;line-height:36px;height:36px;color:#5b7696;letter-spacing:0.65px;">Show rows per page</span>
<div class="r" style="left:544.5px;top:1204.5px;width:130px;height:59px;background:#fff;border:2px solid #e1e6f0;border-radius:9px;box-sizing:border-box;"></div>
<span class="t" style="left:568.0px;top:1221px;font-size:24px;line-height:27px;height:27px;color:#222;letter-spacing:2.00px;">20</span>
<svg class="r" style="left:634px;top:1226px;" width="24" height="18" viewBox="0 0 24 18" fill="none" stroke="#0d1f4a" stroke-width="3.2" stroke-linecap="round" stroke-linejoin="round"><path d="M4.8 5 L12 12.2 L19.2 5"/></svg>
<svg class="r" style="left:2650px;top:1220px;" width="24" height="28" viewBox="0 0 24 28" fill="none" stroke="#7d8ea7" stroke-width="3.4" stroke-linecap="round" stroke-linejoin="round"><path d="M17.5 4.5 L7 14 L17.5 23.5" stroke-linecap="butt" stroke-linejoin="miter"/></svg>
<svg class="r" style="left:2714px;top:1220px;" width="24" height="28" viewBox="0 0 24 28" fill="none" stroke="#7d8ea7" stroke-width="3.4" stroke-linecap="round" stroke-linejoin="round"><path d="M6.5 4.5 L17 14 L6.5 23.5" stroke-linecap="butt" stroke-linejoin="miter"/></svg>
<div class="r" style="left:2742px;top:1222px;width:96px;height:96px;background:#3d7de8;border-radius:50%;box-shadow:0 2px 18px rgba(0,0,0,.12);"></div>
<svg class="r" style="left:2742px;top:1222px" width="96" height="96" viewBox="0 0 96 96"><path d="M31 23.5 H65 a4 4 0 0 1 4 4 V72 L57 67.5 H31 a4 4 0 0 1 -4 -4 V27.5 a4 4 0 0 1 4 -4 Z" fill="#fff"/><path d="M34.5 55.5 Q48 64.5 62.5 55.5" fill="none" stroke="#3d7de8" stroke-width="2.6" stroke-linecap="round"/></svg>
</div></body></html>
